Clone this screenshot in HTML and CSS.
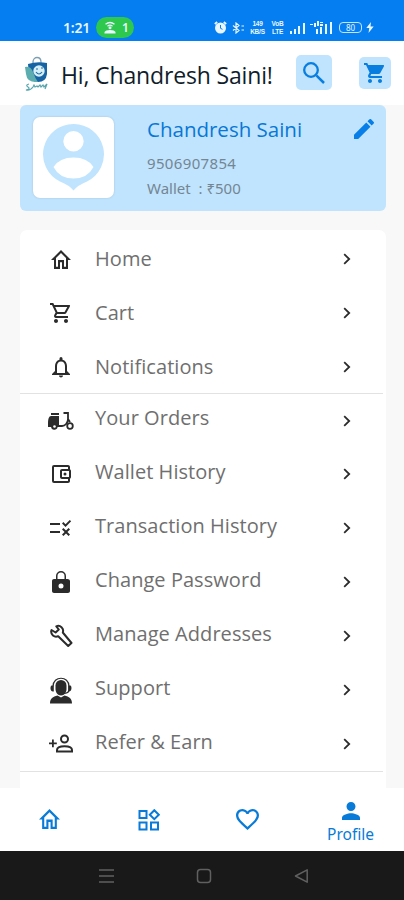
FILE: index.html
```
<!DOCTYPE html>
<html lang="en">
<head>
<meta charset="utf-8">
<title>Profile</title>
<link rel="stylesheet" href="styles.css">
</head>
<body>
<svg class="defs" aria-hidden="true">
  <symbol id="home" viewBox="2 3 20 17" preserveAspectRatio="none"><path d="M12 5.69l5 4.5V18h-2v-6H9v6H7v-7.81l5-4.5M12 3L2 12h3v8h6v-6h2v6h6v-8h3L12 3z"/></symbol>
  <symbol id="cart" viewBox="0 0 24 24"><path d="M15.55 13c.75 0 1.41-.41 1.75-1.03l3.58-6.49A.996.996 0 0 0 20.01 4H5.21l-.94-2H1v2h2l3.6 7.59-1.35 2.44C4.52 15.37 5.48 17 7 17h12v-2H7l1.1-2h7.45zM6.16 6h12.15l-2.76 5H8.53L6.16 6zM7 18c-1.1 0-1.99.9-1.99 2S5.900 22 7 22s2-.9 2-2-.9-2-2-2zm10 0c-1.1 0-1.99.9-1.99 2s.89 2 1.990 2 2-.9 2-2-.9-2-2-2z"/></symbol>
  <symbol id="cart-solid" viewBox="0 0 24 24"><path d="M7 18c-1.1 0-1.99.9-1.99 2S5.900 22 7 22s2-.9 2-2-.9-2-2-2zM1 2v2h2l3.600 7.590-1.350 2.450C4.520 15.370 5.480 17 7 17h12v-2H7.420l.68-2h7.450c.75 0 1.410-.41 1.750-1.030l3.580-6.490A1 1 0 0 0 20 4H5.210l-.94-2H1zm16 16c-1.100 0-1.990.9-1.990 2s.89 2 1.990 2 2-.9 2-2-.9-2-2-2z"/></symbol>
  <symbol id="bell" viewBox="0 0 24 24"><path d="M12 22.500c1.100 0 2-.9 2-2h-4c0 1.100.9 2 2 2zm6-6.500v-5c0-3.070-1.630-5.640-4.500-6.320V3.500a1.500 1.500 0 0 0-3 0v1.180C7.640 5.360 6 7.920 6 11v5l-3 3v1h18v-1l-3-3zm-2 2H8v-7c0-2.480 1.510-4.500 4-4.500s4 2.020 4 4.500v7z"/></symbol>
  <symbol id="scooter" viewBox="0 0 26 20"><path fill="none" stroke="currentColor" stroke-width="1.800" d="M3 3h8M15.500 2H20v6c0 4-3 7-6 7H9l-1-1M20 8l2 3"/><path d="M3 5h8v10H9.500a3.200 3.200 0 0 1-6.400 1H0v-4c0-4 1-7 3-7z"/><circle cx="6.500" cy="15.500" r="1.300" fill="#fff"/><circle cx="22" cy="15" r="2.800" fill="none" stroke="currentColor" stroke-width="1.800"/></symbol>
  <symbol id="wallet" viewBox="0 0 24 24"><path d="M21 7.280V5c0-1.100-.9-2-2-2H5a2 2 0 0 0-2 2v14a2 2 0 0 0 2 2h14c1.100 0 2-.9 2-2v-2.280A2 2 0 0 0 22 15V9a2 2 0 0 0-1-1.720zM20 9v6h-7V9h7zM5 19V5h14v2h-6c-1.100 0-2 .9-2 2v6c0 1.100.9 2 2 2h6v2H5z"/><circle cx="16" cy="12" r="1.500"/></symbol>
  <symbol id="rule" viewBox="0 0 24 24"><path d="M16.540 11L13 7.460l1.410-1.410 2.120 2.120 4.240-4.240 1.410 1.410L16.540 11zM11 7H1v2h10V7zm10 6.410L19.590 12 17 14.590 14.410 12 13 13.410 15.590 16 13 18.590 14.410 20 17 17.410 19.590 20 21 18.590 18.410 16 21 13.410zM11 15H1v2h10v-2z"/></symbol>
  <symbol id="lock" viewBox="0 0 24 24"><path fill-rule="evenodd" d="M18.500 9H17V6A5 5 0 0 0 7 6v3H5C3.900 9 3 9.800 3 11v10c0 1.100.9 2 2 2h14c1.100 0 2-.9 2-2V11c0-1.200-1.400-2-2.500-2zM12 18.500a2.500 2.500 0 1 1 0-5 2.500 2.500 0 0 1 0 5zM15.500 9h-7V6a3.500 3.500 0 0 1 7 0z"/></symbol>
  <symbol id="wrench" viewBox="0 0 24 24"><path fill="none" stroke="currentColor" stroke-width="2" stroke-linejoin="round" d="M13.800 8.500c.7-2 .1-4-1.300-5.300-1.500-1.400-3.500-1.600-5.200-.9l2.500 3.200-3.200 3L2.500 6C1.700 8 2.500 10 4 11.500c1.500 1.300 3.500 1.500 5.200.7l10 9.800 3.300-3z"/></symbol>
  <symbol id="agent" viewBox="0 0 24 26"><path d="M6.500 8a5.500 5.500 0 0 1 11 0v3c0 4-2 7-5.500 7s-5.500-3-5.500-7z"/><path fill="none" stroke="currentColor" stroke-width="1.200" d="M4 9C4-2 20-2 20 9v3c0 3-3 4-6 4"/><path d="M2.500 8h2.300v6H4c-3 0-3-5-1.500-6zm16.700 0h2.300c1.500 1 1.500 6-1.500 6h-.8zM1 26c0-5 3-7 7.500-8l3.500 2 3.500-2c4.500 1 7.500 3 7.500 8z"/></symbol>
  <symbol id="refer" viewBox="0 0 26 20"><path d="M4 5.500h1.800v3h3v1.800h-3v3H4v-3H1V8.500h3z"/><g fill="none" stroke="currentColor" stroke-width="2"><circle cx="16.500" cy="5" r="3.500"/><path d="M9 17.500V16c0-5 15-5 15 0v1.500z"/></g></symbol>
  <symbol id="chevron" viewBox="0 0 8 12"><path fill="none" stroke="currentColor" stroke-width="1.800" d="M1.200 1.200L6.200 6l-5 4.800"/></symbol>
  <symbol id="person" viewBox="4 4 16 16"><path d="M12 12c2.210 0 4-1.790 4-4s-1.790-4-4-4-4 1.790-4 4 1.790 4 4 4zm0 2c-2.670 0-8 1.340-8 4v2h16v-2c0-2.660-5.330-4-8-4z"/></symbol>
</svg>

<header class="status">
  <span class="clock">1:21</span>
  <span class="hotspot">
    <svg width="12" height="13" viewBox="0 0 12 13"><path fill="none" stroke="currentColor" stroke-width="1.300" d="M1.500 3.200q4.500-3.400 9 0M3.500 5.200q2.500-2 5 0"/><circle cx="6" cy="6.800" r="1.500"/><path d="M.5 12.500V11q1-2 5.500-2t5.500 2v1.500z"/></svg>
    <b>1</b>
  </span>
  <span class="tray">
    <svg class="alarm" width="13" height="13" viewBox="0 0 13 13"><circle cx="6.500" cy="7" r="5.500"/><path stroke="currentColor" stroke-width="1.800" d="M.8 3l2.400-2M12.200 3L9.800 1"/><path fill="none" stroke="#047ef0" d="M6.500 4v3.300l2 1"/></svg>
    <svg class="bt" width="13" height="12" viewBox="0 0 13 12"><path fill="none" stroke="currentColor" stroke-width="1.200" d="M1 3.500l6 5L4 11V1l3 2.500-6 5M9.500 4H12M9.500 8H12"/></svg>
    <span class="tiny speed"><i>149</i><i>KB/S</i></span>
    <span class="tiny volte"><i>VoB</i><i>LTE</i></span>
    <svg class="sig" width="17" height="12" viewBox="0 0 17 12"><path d="M1 9h2v3H1zM5 7h2v5H5zM9 4h2v8H9zM14 1h2v11h-2z"/></svg>
    <svg class="sig2" width="23" height="13" viewBox="0 0 23 13"><path d="M0 3h3v1H0zM6 8h2v5H6zM10 6h2v7h-2zM15 3h2v10h-2zM20 1h2v12h-2zM4 2h2v4H4zM7 0h2v5H7zM10 1h3v1h-3zM10 3h3v2h-3z"/></svg>
    <span class="battery">80</span>
    <svg class="bolt" width="8" height="11" viewBox="0 0 8 11"><path d="M5 0L.3 6h3L2.500 11 7.700 4.500H4.500z"/></svg>
  </span>
</header>

<div class="appbar">
  <svg class="logo" width="26" height="36" viewBox="0 0 26 36"><path fill="none" stroke="#7c9fb4" stroke-width="1.300" d="M9 9V6c0-6 8-6 8 0v3"/><path fill="#1764a5" d="M4 8q9-3 19-1v11q-1 8-9 8t-9-7z"/><path fill="#5cadb0" d="M1 11q6-1 8 5t5 10q-11 1-12-8z"/><circle cx="15" cy="15" r="5.700" fill="#d7f0f6"/><path fill="none" stroke="#1d70ae" stroke-width="1.200" d="M12 13h2m3-1h2m-7 4q3 4 6 0"/><path fill="none" stroke="#55a5ae" stroke-width="1.200" d="M5 28q-4 1-1 3t-2 3q4 1 7-3l1-2 1 2 2-1 1 1 2-2 1 2 2-2 1 2 3-3-2 5"/></svg>
  <h1>Hi, Chandresh Saini!</h1>
  <button class="tile search" aria-label="Search"><svg width="24" height="24" viewBox="0 0 24 24"><path fill="none" stroke="currentColor" stroke-width="2.500" d="M14.300 14.300L22 22"/><circle cx="9" cy="9" r="6.800" fill="none" stroke="currentColor" stroke-width="2.300"/></svg></button>
  <button class="tile basket" aria-label="Cart"><svg width="24" height="24"><use href="#cart-solid"/></svg></button>
</div>

<main>
  <section class="profile">
    <div class="avatar"><svg width="61" height="67" viewBox="0 0 61 67"><path fill="#c0e4fd" fill-rule="evenodd" d="M30.500 0A30.300 30.300 0 0 0 17 57.500q9 3.500 13.500 9 4.500-5.500 13.500-9A30.300 30.300 0 0 0 30.500 0zm0 7a10.200 10.200 0 1 0 0 20.400 10.200 10.200 0 0 0 0-20.400zM10.500 43q6-9.500 20-9.500t20 9.500q-6 11.500-20 11.500T10.500 43z"/></svg></div>
    <div class="details">
      <h2>Chandresh Saini</h2>
      <p class="phone">9506907854</p>
      <p>Wallet&nbsp; : ₹500</p>
    </div>
    <svg class="edit" width="20" height="20" viewBox="3 3 18 18"><path d="M3 17.250V21h3.750L17.810 9.940l-3.750-3.750L3 17.250zM20.710 7.040a1 1 0 0 0 0-1.410l-2.340-2.340a1 1 0 0 0-1.410 0l-1.830 1.830 3.750 3.750 1.830-1.830z"/></svg>
  </section>

  <nav class="menu">
    <div class="group first">
      <a><svg class="ic i-home"><use href="#home"/></svg><span>Home</span><svg class="chev"><use href="#chevron"/></svg></a>
      <a><svg class="ic i-cart"><use href="#cart"/></svg><span>Cart</span><svg class="chev"><use href="#chevron"/></svg></a>
      <a><svg class="ic i-bell"><use href="#bell"/></svg><span>Notifications</span><svg class="chev"><use href="#chevron"/></svg></a>
    </div>
    <div class="group second">
      <a><svg class="ic i-scooter"><use href="#scooter"/></svg><span>Your Orders</span><svg class="chev"><use href="#chevron"/></svg></a>
      <a><svg class="ic i-wallet"><use href="#wallet"/></svg><span>Wallet History</span><svg class="chev"><use href="#chevron"/></svg></a>
      <a><svg class="ic i-rule"><use href="#rule"/></svg><span>Transaction History</span><svg class="chev"><use href="#chevron"/></svg></a>
      <a><svg class="ic i-lock"><use href="#lock"/></svg><span>Change Password</span><svg class="chev"><use href="#chevron"/></svg></a>
      <a><svg class="ic i-wrench"><use href="#wrench"/></svg><span>Manage Addresses</span><svg class="chev"><use href="#chevron"/></svg></a>
      <a><svg class="ic i-agent"><use href="#agent"/></svg><span>Support</span><svg class="chev"><use href="#chevron"/></svg></a>
      <a><svg class="ic i-refer"><use href="#refer"/></svg><span>Refer &amp; Earn</span><svg class="chev"><use href="#chevron"/></svg></a>
    </div>
  </nav>
</main>

<footer class="tabs">
  <a><svg width="21" height="20"><use href="#home"/></svg></a>
  <a><svg width="22" height="22" viewBox="0 0 22 22"><path fill="none" stroke="currentColor" stroke-width="2" d="M1.500 2H8.500V9H1.500zM1.500 13.500H8.500v7H1.500zM13 13.500h7v7h-7zM16.300 1.200l4.500 4.500-4.500 4.500-4.500-4.500z"/></svg></a>
  <a><svg width="23" height="21" viewBox="2 3 20 18.350" preserveAspectRatio="none"><path d="M16.500 3c-1.740 0-3.410.81-4.500 2.090C10.910 3.810 9.240 3 7.500 3 4.420 3 2 5.420 2 8.500c0 3.780 3.400 6.860 8.550 11.540L12 21.350l1.450-1.320C18.600 15.360 22 12.280 22 8.500 22 5.420 19.580 3 16.500 3zm-4.400 15.550l-.1.100-.1-.1C7.140 14.240 4 11.390 4 8.500 4 6.500 5.500 5 7.500 5c1.540 0 3.040.99 3.570 2.360h1.870C13.460 5.990 14.960 5 16.500 5c2 0 3.500 1.500 3.500 3.500 0 2.890-3.140 5.740-7.900 10.050z"/></svg></a>
  <a class="active"><svg width="18" height="18"><use href="#person"/></svg><span>Profile</span></a>
</footer>

<div class="sysbar">
  <svg width="15" height="16" viewBox="0 0 15 16"><path stroke="currentColor" stroke-width="1.600" d="M0 2h15M0 8h15M0 14h15"/></svg>
  <svg width="16" height="16" viewBox="0 0 16 16"><rect x="1.500" y="1.500" width="13" height="13" rx="3" fill="none" stroke="currentColor" stroke-width="1.500"/></svg>
  <svg width="15" height="16" viewBox="0 0 15 16"><path fill="none" stroke="currentColor" stroke-width="1.500" stroke-linejoin="round" d="M13.200 1.800v12.400L1.500 8z"/></svg>
</div>
</body>
</html>
```
FILE: styles.css
```
* { box-sizing: border-box; }
body { margin: 0; width: 404px; height: 900px; overflow: hidden; display: flex; flex-direction: column; background: #f8f8f8; font-family: "Noto Sans", "Open Sans", sans-serif; }
svg { fill: currentColor; flex: none; display: block; }
h1, h2, p { margin: 0; font-weight: 400; white-space: nowrap; }
.defs { display: none; }

.status { height: 41px; flex: none; background: #047ef0; color: #eaf6ff; display: flex; align-items: center; padding: 14px 0 0 63px; }
.clock { width: 33px; font: 600 14px/20px "Noto Sans", sans-serif; letter-spacing: -.2px; }
.hotspot { width: 38px; height: 21px; border-radius: 11px; background: #2dc84d; display: flex; align-items: center; padding-left: 8px; gap: 6px; }
.hotspot b { font-size: 12px; font-weight: 600; }
.tray { display: flex; align-items: center; margin-left: 80px; }
.alarm { margin-right: 5px; }
.bt { margin-right: 4px; }
.tiny { display: flex; flex-direction: column; align-items: center; width: 17px; font: 700 6.500px/8px "Liberation Sans", sans-serif; letter-spacing: -.2px; white-space: nowrap; }
.tiny i { font-style: normal; }
.volte { margin-left: 4px; width: 15px; }
.sig { margin-left: 4px; }
.sig2 { margin-left: 4px; }
.battery { margin: 0 4px 0 6px; width: 23px; height: 11px; border: 1px solid #c5e5ff; border-radius: 4px; font-size: 8px; line-height: 9px; text-align: center; }

.appbar { height: 64px; flex: none; background: #fff; display: flex; padding-left: 24px; }
.logo { margin-top: 15px; }
h1 { margin: 17px 0 0 11px; width: 235px; font: 400 23px/34px "Open Sans", sans-serif; letter-spacing: -.15px; color: #101d2b; }
.tile { border: 0; padding: 0; background: #c0e4fd; color: #087ee0; border-radius: 5px; display: grid; place-items: center; }
.search { width: 36px; height: 35px; margin-top: 14px; }
.basket { width: 32px; height: 32px; margin: 16px 0 0 27px; }

main { height: 683px; flex: none; padding: 0 18px 0 20px; }
.profile { height: 106px; background: #c0e4fd; border-radius: 6px; display: flex; padding: 12px 11px 0 13px; }
.avatar { width: 81px; height: 81px; background: #fff; border-radius: 7px; display: flex; justify-content: center; padding-top: 7px; box-shadow: 0 0 2px #9fbfd4; }
.details { margin-left: 33px; width: 207px; color: #748694; font-size: 15px; }
h2 { font: 400 20.500px/26px "Open Sans", sans-serif; color: #0877d6; margin-top: -1px; }
.details p { line-height: 25px; }
.details .phone { margin-top: 9px; letter-spacing: .35px; }
.edit { color: #087ee8; margin-top: 2px; }

.menu { margin-top: 19px; height: 559px; background: #fff; border-radius: 7px 7px 0 0; padding-top: 2px; color: #2b2b2b; }
.group { border-bottom: 1px solid #e2e2e2; margin-right: 3px; }
.first { height: 162px; }
.second { height: 378px; }
.group a { height: 54px; display: grid; grid-template-columns: 82px 248px 8px; align-items: center; margin-left: -7px; }
.second a:first-child { height: 53px; }
.group .ic { justify-self: center; margin-left: 14px; width: 24px; height: 24px; }
.group span { color: #6f6f6f; font: 400 20px/28px "Open Sans", sans-serif; letter-spacing: .05px; white-space: nowrap; }
.second span { margin-top: -5px; }
.group .chev { width: 8px; height: 12px; }
.group .i-home { width: 20px; height: 19px; }
.group .i-scooter { width: 26px; height: 20px; }
.group .i-agent { width: 24px; height: 27px; }
.group .i-refer { width: 26px; height: 20px; }

.tabs { height: 63px; flex: none; background: #fff; display: grid; grid-template-columns: 99px 99px 99px 107px; color: #087bd8; }
.tabs a { display: flex; flex-direction: column; align-items: center; padding-top: 21px; }
.tabs a.active { padding-top: 14px; }
.tabs span { font-size: 15.500px; line-height: 20px; margin-top: 4px; }
.sysbar { height: 49px; flex: none; background: #191919; color: #606060; display: flex; padding: 17px 0 0 99px; gap: 82px; }
```
